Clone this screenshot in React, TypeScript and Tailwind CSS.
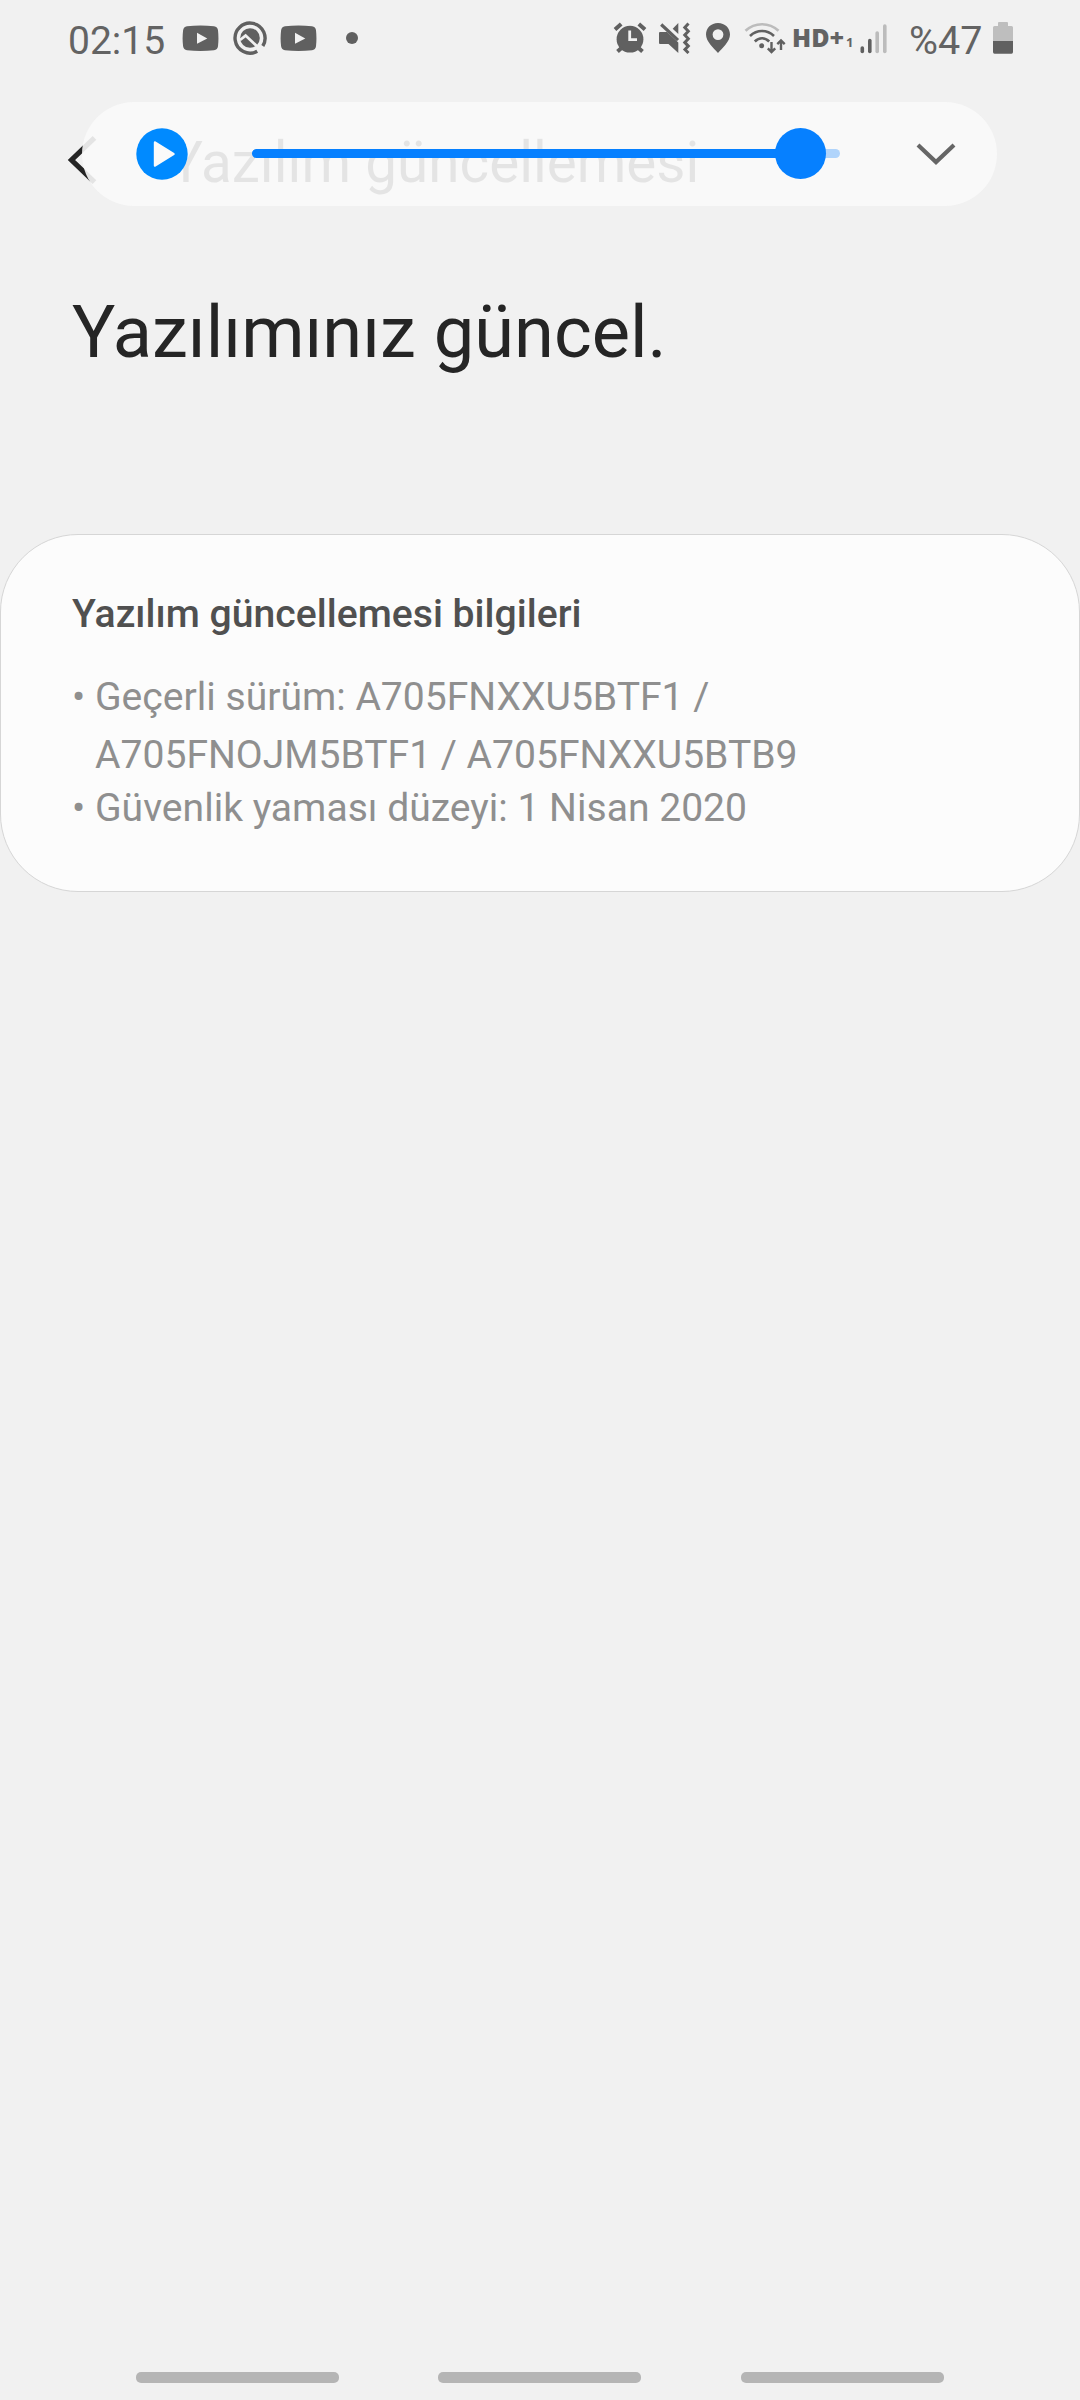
import type { ReactNode } from "react";

const ICON = "#606060";

function YouTubeIcon() {
  return (
    <svg className="h-[27px] w-[37px] shrink-0" viewBox="0 0 37 27">
      <path
        fill={ICON}
        d="M5 1.2Q18.500 -0.400 32 1.200Q35.600 1.800 36 5.200Q36.900 13.500 36 21.300Q35.600 24.800 32 25.300Q18.500 26.800 5 25.300Q1.600 24.800 1.100 21.300Q0.100 13.500 1.100 5.200Q1.600 1.700 5 1.200Z"
      />
      <path fill="#f1f1f1" d="M15 7.800L25.300 13.400L15 18.700Z" />
    </svg>
  );
}

function CircleQIcon() {
  return (
    <svg className="h-[36px] w-[36px] shrink-0" viewBox="0 0 36 36">
      <path d="M25.200 31.300A15 15 0 1 1 30.800 26" fill="none" stroke={ICON} strokeWidth="3.400" />
      <circle cx="18" cy="18" r="9.800" fill={ICON} />
      <path d="M8 20L13.600 15.600L30 31" fill="none" stroke="#f1f1f1" strokeWidth="2.800" />
    </svg>
  );
}

function AlarmIcon() {
  return (
    <svg className="h-[32px] w-[34px] shrink-0" viewBox="0 0 34 32">
      <circle cx="17" cy="17.200" r="13.400" fill={ICON} />
      <path d="M2 7.500L8.200 2M25.800 2L32 7.500" stroke={ICON} strokeWidth="4" />
      <path d="M4.500 29.500L9 25.500M29.500 29.500L25 25.500" stroke={ICON} strokeWidth="4" />
      <path d="M16.700 8.500V17.700H24" fill="none" stroke="#f1f1f1" strokeWidth="2.800" />
    </svg>
  );
}

function MuteVibrateIcon() {
  return (
    <svg className="h-[32px] w-[33px] shrink-0" viewBox="0 0 33 32">
      <path fill={ICON} d="M2 10H9L20.300 20.500V31L10.500 22H2Q1 22 1 21V11Q1 10 2 10Z" />
      <path d="M3.200 2.500L20 18.200" stroke={ICON} strokeWidth="3.200" />
      <path fill={ICON} d="M20.300 1V12L14.700 6.700Z" />
      <path
        d="M30.500 1.500L26.800 5.500L30.300 9.300L26.800 13L30.300 16.700L26.800 20.400L30.300 24.100L27 27.500L30.500 31"
        fill="none"
        stroke={ICON}
        strokeWidth="3"
      />
    </svg>
  );
}

function PinIcon() {
  return (
    <svg className="h-[32px] w-[26px] shrink-0" viewBox="0 0 26 32">
      <path
        fill={ICON}
        fillRule="evenodd"
        d="M13 1C20 1 25 6 25 12.500C25 19.500 17.500 26 13 31C8.500 26 1 19.500 1 12.500C1 6 6 1 13 1ZM13 7.200A5.400 5.400 0 1 0 13 18A5.400 5.400 0 1 0 13 7.200Z"
      />
    </svg>
  );
}

function WifiIcon() {
  return (
    <svg className="h-[32px] w-[42px] shrink-0" viewBox="0 0 42 32">
      <g fill="none" strokeWidth="2.600">
        <path d="M1.500 8.800Q8.500 2.200 18 2.200Q27.500 2.200 34.500 8.800" stroke="#bcbcbc" />
        <path d="M6 14Q11.200 9 18 9Q24.800 9 30 14" stroke={ICON} />
        <path d="M10.800 19.500Q14 16.200 18 16.200Q22 16.200 25.200 19.500" stroke={ICON} />
      </g>
      <circle cx="17.700" cy="23.700" r="2.500" fill={ICON} />
      <path
        d="M27.500 20V30M23.800 26.300L27.500 30L31.200 26.300M37 28V18.500M33.300 22.200L37 18.500L40.700 22.200"
        fill="none"
        stroke={ICON}
        strokeWidth="2.400"
      />
    </svg>
  );
}

function SignalIcon() {
  return (
    <svg className="mt-[2px] h-[30px] w-[28px] shrink-0" viewBox="0 0 28 30">
      <rect x="0.500" y="22.300" width="3.600" height="7" rx="1.800" fill={ICON} />
      <rect x="8" y="14.800" width="3.600" height="14.500" rx="1.800" fill={ICON} />
      <rect x="15.400" y="7.300" width="3.600" height="22" rx="1.800" fill="#bcbcbc" />
      <rect x="23" y="0.300" width="3.600" height="29" rx="1.800" fill="#bcbcbc" />
    </svg>
  );
}

function BatteryIcon() {
  return (
    <svg className="h-[32px] w-[20px] shrink-0" viewBox="0 0 20 32">
      <path fill="#bebebe" d="M6 0H14Q15 0 15 1V4H18.500Q20 4 20 5.500V20H0V5.500Q0 4 1.500 4H5V1Q5 0 6 0Z" />
      <path fill={ICON} d="M0 19H20V30Q20 31.800 18.500 31.800H1.500Q0 31.800 0 30Z" />
    </svg>
  );
}

function StatusBar() {
  return (
    <header className="flex h-[76px] items-center pr-[67px] pl-[68px] text-[#636363]">
      <span className="mt-[6px] w-[97px] text-[39px] leading-[48px] whitespace-nowrap">02:15</span>
      <div className="flex items-center pl-[17px]">
        <YouTubeIcon />
        <span className="ml-[13px] flex">
          <CircleQIcon />
        </span>
        <span className="ml-[12px] flex">
          <YouTubeIcon />
        </span>
        <span className="ml-[29px] h-[12px] w-[12px] rounded-full bg-[#606060]" />
      </div>
      <div className="ml-auto flex items-center">
        <AlarmIcon />
        <span className="ml-[11px] flex">
          <MuteVibrateIcon />
        </span>
        <span className="ml-[14px] flex">
          <PinIcon />
        </span>
        <span className="ml-[13px] flex">
          <WifiIcon />
        </span>
        <span className="-mt-[2px] ml-[6px] w-[54px] font-['Open_Sans'] text-[25px] leading-[32px] font-extrabold whitespace-nowrap">
          HD+
        </span>
        <span className="mt-[8px] w-[14px] font-['Open_Sans'] text-[13px] leading-[16px] font-bold">1</span>
        <SignalIcon />
        <span className="mt-[6px] ml-[21px] w-[84px] text-[39.5px] leading-[48px] whitespace-nowrap">%47</span>
        <BatteryIcon />
      </div>
    </header>
  );
}

function AppBar() {
  return (
    <div className="flex h-[172px] items-start pl-[67px]">
      <svg className="mt-[58px] h-[52px] w-[32px] shrink-0" viewBox="0 0 32 52">
        <path d="M27.500 3.900L4.500 26L27.500 48.100" fill="none" stroke="#252525" strokeWidth="5.200" />
      </svg>
      <h2 className="mt-[53px] ml-[70px] text-[56.6px] leading-[68px] whitespace-nowrap">Yazılım güncellemesi</h2>
    </div>
  );
}

function VolumePanel() {
  return (
    <div className="absolute top-[102px] left-[82px] flex h-[104px] w-[915px] items-center rounded-full bg-[#fafafa]/90 pl-[54px]">
      <svg className="h-[52px] w-[52px] shrink-0" viewBox="0 0 52 52">
        <circle cx="26" cy="26" r="25.700" fill="#008aff" />
        <path
          d="M19 14.500L37.500 26L19 37.500Z"
          fill="#fafafa"
          stroke="#fafafa"
          strokeWidth="2.400"
          strokeLinejoin="round"
        />
      </svg>
      <div className="relative mb-[2px] ml-[64px] flex h-[9px] w-[588px] items-center rounded-full bg-[#b0d4fb]">
        <span className="h-[9px] w-[548px] rounded-l-full bg-[#0680ff]" />
        <span className="absolute top-[-21px] left-[523px] h-[51px] w-[51px] rounded-full bg-[#0680ff]" />
      </div>
      <svg className="ml-[76px] h-[24px] w-[40px] shrink-0" viewBox="0 0 40 24">
        <path d="M2 3L20 20L38 3" fill="none" stroke="#666666" strokeWidth="4.200" />
      </svg>
    </div>
  );
}

function Bullet({ children, lineClass }: { children: ReactNode; lineClass: string }) {
  return (
    <li className={`flex whitespace-nowrap ${lineClass}`}>
      <span className="w-[23px] shrink-0">•</span>
      <span>{children}</span>
    </li>
  );
}

export default function App() {
  return (
    <div className="relative flex h-[2400px] w-[1080px] flex-col overflow-hidden bg-[#f1f1f1] font-[Roboto,sans-serif] text-[#252525]">
      <StatusBar />
      <AppBar />
      <h1 className="mt-[43px] pl-[72px] text-[72.2px] leading-[84px] whitespace-nowrap">Yazılımınız güncel.</h1>
      <section className="mt-[159px] h-[358px] w-full rounded-[78px] border border-[#d6d6d6] bg-[#fcfcfc] px-[71px] pt-[55px]">
        <h3 className="text-[39.15px] leading-[48px] font-medium whitespace-nowrap text-[#505050]">
          Yazılım güncellemesi bilgileri
        </h3>
        <ul className="mt-[30px] text-[39.1px] text-[#8f8f8f]">
          <Bullet lineClass="leading-[58px]">
            Geçerli sürüm: A705FNXXU5BTF1 /<br />
            A705FNOJM5BTF1 / A705FNXXU5BTB9
          </Bullet>
          <Bullet lineClass="leading-[48px]">Güvenlik yaması düzeyi: 1 Nisan 2020</Bullet>
        </ul>
      </section>
      <nav className="mt-auto mb-[17px] flex pl-[136px]">
        <span className="h-[11px] w-[203px] rounded-[5px] bg-[#b5b5b5]" />
        <span className="ml-[99px] h-[11px] w-[203px] rounded-[5px] bg-[#b5b5b5]" />
        <span className="ml-[100px] h-[11px] w-[203px] rounded-[5px] bg-[#b5b5b5]" />
      </nav>
      <VolumePanel />
    </div>
  );
}
